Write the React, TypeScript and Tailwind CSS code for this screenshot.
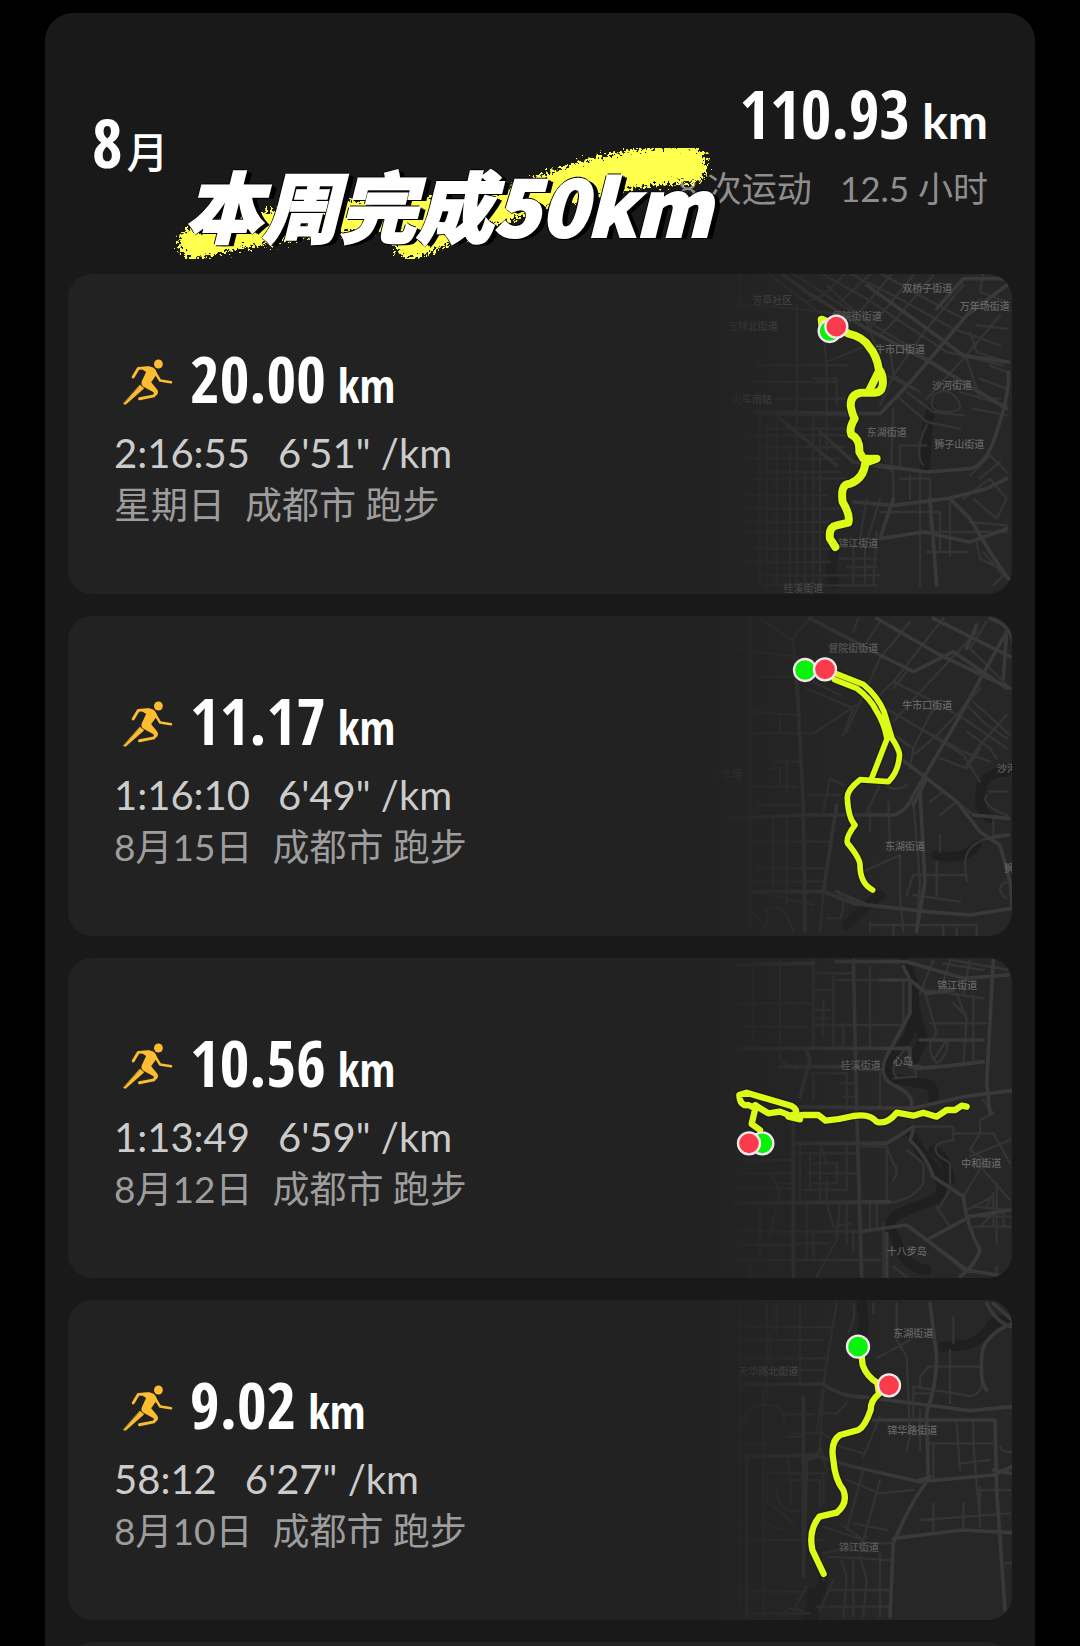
type Label = { x: number; y: number; text: string }

type RouteMapData = {
  top: number
  water: string
  minor: string
  major: string
  labels: Label[]
  route: string
  routeWidth: number
  start: [number, number]
  end: [number, number]
}

type Run = {
  distance: string
  time: string
  pace: string
  date: string
  map: RouteMapData
}

const runs: Run[] = [
  {
    distance: '20.00',
    time: '2:16:55',
    pace: `6'51" /km`,
    date: '星期日',
    map: {
      top: 26,
      water:
        'M462 860L452 905L462 955M735 610L742 480L755 430',
      minor:
        'M180 30V130M260 20L350 90L430 150M160 115L340 130L520 150M440 60L560 170L590 250M300 0L470 110L680 240L880 370M380 0L560 100L800 260L970 300M460 0L640 90L820 190L960 240M560 0L700 80L850 160M520 0L430 90L380 110M600 0L480 110M640 20L540 140L500 180M700 30L560 200M760 30L640 170L600 210M850 60L740 190L640 330L600 420M900 100L790 230L700 340L650 400M960 150L850 280L740 400M890 180L980 190M870 200L890 260L980 290M230 300H500M210 350H470M240 400H500M250 450H500M260 490H500M200 510H500M250 545H490M200 580H480M230 620H480M210 640H500M200 690H440M190 730H480M190 770H470M200 800H460M220 850H450M200 890H450M250 930H600M250 960H590M240 380V950M260 480V900M290 450V960M330 560V960M350 120V960M375 620V960M400 450V960M420 500V960M520 840V960M555 820V960M590 800L580 960M480 880H590M500 905H590M430 200L440 300V560M440 290L560 240M400 340H470V420M640 430L635 560V620M660 400L740 470L840 490M680 380L760 440L850 450M600 320L700 370M630 250L640 330L720 380M760 390Q800 360 830 400T800 440T760 390M740 540H660V600M740 480Q700 560 730 600M640 620V700M660 640H750V780M690 630V700M720 620V960M600 740H780M560 700L540 820M600 700L560 830M780 740V860M810 710V870M730 800H980M740 860H860M850 700L930 640L980 700M880 700L950 760L980 700M870 630L930 570L980 620M900 640L960 590M870 770L980 780M910 860L970 930L940 960M890 830L900 880L960 910M930 300L980 320M900 340L980 370M840 380L980 420M880 430L980 450M860 280L900 400L960 400M910 20L900 80L980 110',
      major:
        'M220 440L600 445L700 340L860 150L980 60M270 0L380 80L560 190L750 290L930 400L980 430M600 600L740 620L870 610Q920 600 950 500Q990 380 985 320M520 710L640 720L800 700L920 670L980 640M810 700L870 760L930 860L985 940M600 820L730 800L870 830L980 790M640 700L600 820M750 700L770 960M420 500L520 590L640 610M300 460L470 600M560 60L700 160L850 270L985 290M770 130L850 40L985 40',
      labels: [
        { x: 277, y: 116, text: '芳草社区' },
        { x: 218, y: 193, text: '玉林北街道' },
        { x: 215, y: 414, text: '火车南站' },
        { x: 742, y: 79, text: '双桥子街道' },
        { x: 914, y: 135, text: '万年场街道' },
        { x: 530, y: 163, text: '督院街街道' },
        { x: 660, y: 262, text: '牛市口街道' },
        { x: 816, y: 372, text: '沙河街道' },
        { x: 620, y: 511, text: '东湖街道' },
        { x: 838, y: 548, text: '狮子山街道' },
        { x: 535, y: 846, text: '锦江街道' },
        { x: 370, y: 981, text: '桂溪街道' },
      ],
      route:
        'M428 190L425 163L470 182L505 205Q550 215 568 245Q590 270 596 310Q612 330 608 360Q604 382 585 382H545Q512 385 512 420Q516 445 524 460Q506 490 514 508Q540 520 538 560L550 580L590 580L556 592Q552 640 510 655Q480 655 488 710Q512 750 505 772L470 780Q445 785 450 820L466 845M598 315L568 375',
      routeWidth: 24,
      start: [449, 197],
      end: [469, 184],
    },
  },
  {
    distance: '11.17',
    time: '1:16:10',
    pace: `6'49" /km`,
    date: '8月15日',
    map: {
      top: 33,
      water:
        'M500 960Q560 900 600 870M890 720Q850 770 770 750M980 500Q900 500 900 580Q900 620 930 640',
      minor:
        'M210 40V960M240 40L335 105L390 40M340 110L345 220L360 330M150 130L350 155M240 215L350 215M210 320L350 330M215 385H400L530 300M300 340V385M280 470H360M270 490L300 490V540M320 470V560M380 250L520 310L490 390M400 230L480 270M520 80L535 40M600 50L560 110M690 50L600 160L500 380M790 40L640 230L600 270M890 80L740 240L640 350M920 50L870 130L980 240M640 230L760 290L850 340L980 430M600 300L720 370L850 450L900 530M650 400L700 430L770 290M700 450L760 400L830 330M740 380L850 440L930 470M860 300L920 360L980 400M880 290L990 390M900 250L830 330M980 330L900 420L860 480M860 380L930 430L950 460M780 460L860 490L900 430M630 380L700 430L690 490M210 545H350M230 600H360M380 570H480M430 620L450 520L490 540M210 710H450M230 790H440M280 640V860M320 640V900M210 830H430M230 860L400 900M250 920Q290 890 320 930L340 980M260 960V920M420 980L430 870M440 940H480Q500 900 480 870M560 620L600 540M570 680L570 620M625 590L630 720M700 590L720 830L710 980M550 800L660 750M660 750V870L670 980M680 870L700 810H860M780 690V740M770 770V870M860 830L855 770Q860 720 920 700M700 870L840 890M570 950V980M570 960H890V990M640 960V990M790 960V990M830 970V990M780 630L830 590L880 630M750 590L790 560M930 560H980M920 570Q900 600 980 630M940 640V690L980 690M980 880Q940 850 980 830M200 900L260 970M640 250L680 200M680 540Q650 560 620 545',
      major:
        'M150 640L380 630H640Q680 620 700 570L830 350L980 80M350 220L370 600L375 980M390 40L600 150L700 200L820 140L980 250M590 40L780 150L990 250M760 40L990 155M930 40Q990 60 1000 110M470 600L430 860L520 895L740 920L870 930L996 910M470 860L560 900M660 460L740 520L830 590L900 680L960 720L990 830L996 900M880 630L985 640M740 520L700 600M890 60L860 130M980 80L970 220M210 860H440M720 560L735 830L710 980M920 700L985 690',
      labels: [
        { x: 520, y: 140, text: '督院街街道' },
        { x: 742, y: 312, text: '牛市口街道' },
        { x: 675, y: 735, text: '东湖街道' },
        { x: 981, y: 500, text: '沙河' },
        { x: 1003, y: 800, text: '狮子' },
        { x: 140, y: 520, text: '石羊场' },
      ],
      route:
        'M463 204L550 238Q594 275 612 320L636 400Q662 440 658 455Q655 500 625 530L540 524Q500 555 502 580Q505 640 525 660Q495 700 503 715Q540 760 540 780Q540 835 578 855M463 224L530 250Q571 281 588 316Q613 355 621 402L575 520',
      routeWidth: 17,
      start: [375, 195],
      end: [435, 193],
    },
  },
  {
    distance: '10.56',
    time: '1:13:49',
    pace: `6'59" /km`,
    date: '8月12日',
    map: {
      top: 24,
      water:
        'M672 30Q710 100 700 200Q690 280 640 310Q600 370 640 385L720 400Q770 400 760 450M700 160L730 270L700 330M690 540Q710 600 760 650Q810 720 760 750L660 790Q610 810 650 870Q670 950 740 960M760 600Q800 620 810 690',
      minor:
        'M220 30V270M300 30V330L350 360M160 160H390M180 230L380 230M170 300L390 295M400 30V290M400 70H520M460 80V290M400 120H460M430 150V260M400 180H450M400 205H450M400 225H670M490 220V290M570 50V290M600 370V470M470 90H670V220M390 370H500V480M400 370V450M480 400H530M490 440H520M540 360H610M760 30L720 130M810 30L780 130M870 30L850 130M790 40L910 60M730 110L770 250Q730 290 770 340Q810 310 800 270M740 120L910 145M750 220H920M830 130L860 210L850 340M880 140V330M800 270L760 330M810 30L990 60M820 160L860 200M540 590H620V760M620 590L640 640Q660 660 640 690M360 580V760M340 610H530M390 610V720M400 640H470V700H400M500 580V720M420 600V760M440 690V760M380 670H530M370 720H500M420 580L440 640M270 670L300 720L270 860M300 700H340M380 760V930M400 840V930M440 760L460 830L510 820M480 760L470 870L410 980M500 760V880M570 760V840M590 760V830M520 840V900M350 880H450M170 760H620M170 845H540M170 885H340M170 930H600M350 930H600M210 930V980M240 760V930M160 630H340M160 670H340M130 715H340M610 820V980M680 600L730 640V700Q700 750 620 760M700 530H820V570Q740 580 780 620L810 640V720L780 770M820 550H940L990 640M770 770L810 830M910 640L850 740M910 660L990 750M920 770L940 730M860 780L940 740V830M880 830H990M900 800H990M950 700V880M970 790V830M880 770L990 780M900 830L940 790M650 380Q620 360 680 290M680 290L710 380L640 385M910 450L940 490L900 510V550L870 600L940 650M870 620L990 570M740 870L850 960M640 950L680 980M950 980V950',
      major:
        'M520 30L530 480L545 980M470 35L680 35L850 85L985 75M940 30L920 400L930 490M320 470L700 475L850 440L995 422M670 50L690 90V190L630 300Q580 380 650 410Q710 440 690 480M340 580L620 580L700 530M700 540L690 570Q740 620 760 680L850 740Q860 830 900 900Q890 940 840 980M740 870L870 800L990 780M170 295H690V350L720 350M720 270H910M710 355Q800 350 910 335M380 300L390 330L360 440M300 350H490M340 500V980M160 760L630 755M540 845L680 825L860 960L980 980M620 850V980M170 45L400 40M600 90H690L740 130L820 120',
      labels: [
        { x: 832, y: 118, text: '锦江街道' },
        { x: 542, y: 358, text: '桂溪街道' },
        { x: 668, y: 346, text: '心岛' },
        { x: 904, y: 652, text: '中和街道' },
        { x: 680, y: 916, text: '十八步岛' },
      ],
      route:
        'M240 540L215 522L226 475L205 465Q180 470 178 435L200 428L240 440L335 468Q355 480 345 492L325 500L360 508L300 485L265 490L240 475L226 465M335 500L370 495H415L437 512Q480 508 520 498Q570 490 590 515Q620 525 650 488L700 497L730 488L770 500L800 480H825L845 467L860 470',
      routeWidth: 19,
      start: [247, 580],
      end: [207, 580],
    },
  },
  {
    distance: '9.02',
    time: '58:12',
    pace: `6'27" /km`,
    date: '8月10日',
    map: {
      top: 30,
      water:
        'M545 40Q560 120 535 160M980 90L940 100Q900 160 850 165L790 170M430 860Q430 900 380 980M390 910L400 980',
      minor:
        'M180 40V960M260 40V320M190 110L460 112M190 150H430M190 205H440M270 130V220M290 40V130M190 240H430M180 284H430M360 40V280M470 40L430 280M520 40Q530 80 505 130M580 40V70M650 40V150L680 200L690 440M590 205L690 150M820 80V160M810 180V340M720 290V260L745 230H905V290Q890 320 870 318L700 290M430 290L410 430M420 370H470L500 340M310 373H400M340 430H430L480 470L550 490M430 300L420 470L440 540M320 440H370M250 290V980M190 400Q200 350 250 345Q320 340 310 400M190 460H260M320 500Q340 560 330 640M260 550H440M260 560V640M290 600Q300 680 360 660M270 640L340 700M430 560V640M320 570H420V650M250 700L310 720M190 750H430M480 700L550 750L600 570M500 720L550 540M520 700L620 720M550 500L600 380M600 390H720M690 440L680 480M720 360V480M740 460H940M760 460V570M830 400L840 540M880 390V460L900 700M840 520L930 510M900 590V710M895 600H990M720 690L990 670M760 640V720M850 640V710M500 570L600 610L700 600M430 710L550 750M560 740L540 760M640 760H560L430 790M440 800L630 810M480 800L500 860L490 980M540 800L560 870L550 980M520 800V980M600 790V980M450 900H630M410 950H630M460 870L420 960M430 810V870M190 905H380M200 970H390M340 960L380 890M310 980Q320 940 370 965M960 470Q970 490 995 485M975 820H995M700 290V380M750 310H700',
      major:
        'M370 320V860M750 40L770 200Q770 280 740 370L745 570M920 40Q950 100 996 110M940 40L996 90M996 100Q900 140 905 210Q900 280 920 300M190 284L430 282Q480 320 560 322L740 345L870 362L996 350M190 500L400 495L520 530L720 575L940 555L996 530M740 575Q690 640 640 760L630 980M945 390L950 600L975 960M640 745L850 720L996 728M580 390L870 390H945M200 500V980M720 570L750 560M940 540L996 550M380 500L370 860M420 480Q400 520 370 500',
      labels: [
        { x: 265, y: 256, text: '天华路北街道' },
        { x: 700, y: 142, text: '东湖街道' },
        { x: 697, y: 432, text: '锦华路街道' },
        { x: 537, y: 783, text: '锦江街道' },
      ],
      route:
        'M545 200L548 225Q560 260 592 278L597 312Q572 330 572 360Q555 410 535 420L480 435Q450 455 460 510Q465 570 490 600Q505 640 470 668L418 680Q385 720 397 780L431 852',
      routeWidth: 19,
      start: [534, 170],
      end: [627, 286],
    },
  },
]

const DISPLAY_FONT = "font-['Open_Sans_Condensed','Roboto_Condensed','Noto_Sans_CJK_SC',sans-serif]"
const TEXT_FONT = "font-['Lato','Noto_Sans_CJK_SC',sans-serif]"

function RunnerIcon() {
  return (
    <svg viewBox="38 42 162 152" className="h-12 w-13 shrink-0" fill="none" stroke="#fcbd30" strokeLinecap="round" strokeLinejoin="round" aria-hidden="true">
      <circle cx="152" cy="61" r="14" fill="#fcbd30" stroke="none" />
      <path d="M72 102L88 75L122 73" strokeWidth="9" />
      <path d="M104 70H128Q140 72 145 84L148 92L129 119L148 142Q154 152 146 161L135 150L106 134Q94 126 100 114L113 86L100 78Z" fill="#fcbd30" stroke="none" />
      <path d="M138 82L157 113L192 119" strokeWidth="8" />
      <path d="M120 128L145 149L138 162L92 171" strokeWidth="9" />
      <path d="M94 128L106 138L48 189L42 187Z" fill="#fcbd30" strokeWidth="2" />
    </svg>
  )
}

function Marker({ at, color }: { at: [number, number]; color: string }) {
  return <circle cx={at[0]} cy={at[1]} r="33" fill={color} stroke="#f4e9ea" strokeWidth="7" />
}

function RouteMap({ map, id }: { map: RouteMapData; id: string }) {
  return (
    <svg viewBox={`0 ${map.top} 996 960`} className="h-80 w-[332px] shrink-0" fill="none" strokeLinecap="round" strokeLinejoin="round" role="img" aria-label="路线地图">
      <defs>
        <linearGradient id={id} gradientUnits="userSpaceOnUse" x1="100" y1="0" x2="640" y2="0">
          <stop offset="0" stopColor="#222222" />
          <stop offset="0.15" stopColor="#222222" stopOpacity="0.8" />
          <stop offset="1" stopColor="#222222" stopOpacity="0" />
        </linearGradient>
      </defs>
      <rect x="0" y="0" width="996" height="1000" fill="#272727" />
      <path d={map.water} stroke="#1f1f1f" strokeWidth="30" />
      <path d={map.minor} stroke="#343434" strokeWidth="7" />
      <path d={map.major} stroke="#393939" strokeWidth="11" />
      <g fill="#666666" fontSize="30" textAnchor="middle" className="font-['Noto_Sans_CJK_SC',sans-serif] font-medium">
        {map.labels.map(l => (
          <text key={l.text} x={l.x} y={l.y}>{l.text}</text>
        ))}
      </g>
      <rect x="0" y="0" width="700" height="1000" fill={`url(#${id})`} />
      <path d={map.route} stroke="#1b1b12" strokeWidth={map.routeWidth + 8} opacity="0.7" />
      <path d={map.route} stroke="#dcfb16" strokeWidth={map.routeWidth} />
      <Marker at={map.start} color="#08f20c" />
      <Marker at={map.end} color="#fb3b4b" />
    </svg>
  )
}

function RunCard({ run, id }: { run: Run; id: string }) {
  return (
    <li className="flex h-80 shrink-0 items-center justify-between overflow-hidden rounded-3xl bg-[#222222]">
      <div className="whitespace-nowrap pl-[46px] pt-3">
        <div className="flex items-center gap-4 pl-2">
          <RunnerIcon />
          <p className={`${DISPLAY_FONT} flex items-baseline gap-3 font-bold leading-[60px] text-white`}>
            <span className="text-[64px]">{run.distance}</span>
            <span className="text-[46px]">km</span>
          </p>
        </div>
        <p className={`${TEXT_FONT} mt-3 flex gap-7 text-[40px] leading-[52px] text-[#cccccc]`}>
          <span>{run.time}</span>
          <span>{run.pace}</span>
        </p>
        <p className={`${TEXT_FONT} flex gap-5 text-[37px] leading-[52px] text-[#9d9d9d]`}>
          <span>{run.date}</span>
          <span>成都市 跑步</span>
        </p>
      </div>
      <RouteMap map={run.map} id={id} />
    </li>
  )
}

function Sticker() {
  return (
    <div className="absolute left-[120px] top-[122px]">
      <svg viewBox="0 0 560 130" className="h-[130px] w-[560px]" fill="none" aria-hidden="true">
        <filter id="spray" x="-5%" y="-20%" width="110%" height="140%">
          <feTurbulence type="fractalNoise" baseFrequency="0.35" numOctaves="3" seed="4" />
          <feDisplacementMap in="SourceGraphic" scale="20" xChannelSelector="R" yChannelSelector="G" result="rough" />
          <feGaussianBlur in="rough" stdDeviation="0.7" />
        </filter>
        <g filter="url(#spray)" stroke="#ffff4d" strokeLinecap="round" strokeLinejoin="round">
          <path d="M30 108Q130 82 262 76L246 108Q360 60 430 40Q480 30 526 32" strokeWidth="32" />
          <path d="M410 48Q470 30 522 29" strokeWidth="38" />
        </g>
      </svg>
      <p className="absolute left-5 top-6 whitespace-nowrap font-['Noto_Sans_CJK_SC',sans-serif] text-[77px] font-black italic leading-[90px] text-white [-webkit-text-stroke:2px_#fff] [text-shadow:-2px_0_0_#000,2px_0_0_#000,0_-2px_0_#000,0_2px_0_#000,4px_1px_0_#000,6px_2px_0_#000]">
        本周完成50km
      </p>
    </div>
  )
}

export default function App() {
  return (
    <main className="h-screen overflow-hidden bg-black px-[45px] pt-[13px]">
      <section className="relative flex min-h-full flex-col rounded-t-[28px] bg-[#191919] px-[23px]">
        <header className="flex h-[261px] items-center justify-between px-6 pt-3">
          <h1 className="flex items-baseline gap-1 pb-4 text-white">
            <span className={`${DISPLAY_FONT} text-[66px] font-bold leading-none`}>8</span>
            <span className="font-['Noto_Sans_CJK_SC',sans-serif] text-[42px] font-medium leading-none">月</span>
          </h1>
          <div className="flex flex-col items-end">
            <p className="flex items-baseline gap-3 text-white">
              <span className={`${DISPLAY_FONT} text-[66px] font-bold leading-[72px]`}>110.93</span>
              <span className={`${TEXT_FONT} text-[48px] font-bold leading-none`}>km</span>
            </p>
            <p className={`${TEXT_FONT} mt-1 flex gap-7 text-[35px] leading-[70px] text-[#8e8e8e]`}>
              <span>8 次运动</span>
              <span>12.5 小时</span>
            </p>
          </div>
        </header>
        <Sticker />
        <ul className="flex flex-col gap-[22px]">
          {runs.map((run, i) => (
            <RunCard key={run.distance} run={run} id={`fade-${i}`} />
          ))}
          <li className="h-80 shrink-0 rounded-3xl bg-[#222222]" />
        </ul>
      </section>
    </main>
  )
}
